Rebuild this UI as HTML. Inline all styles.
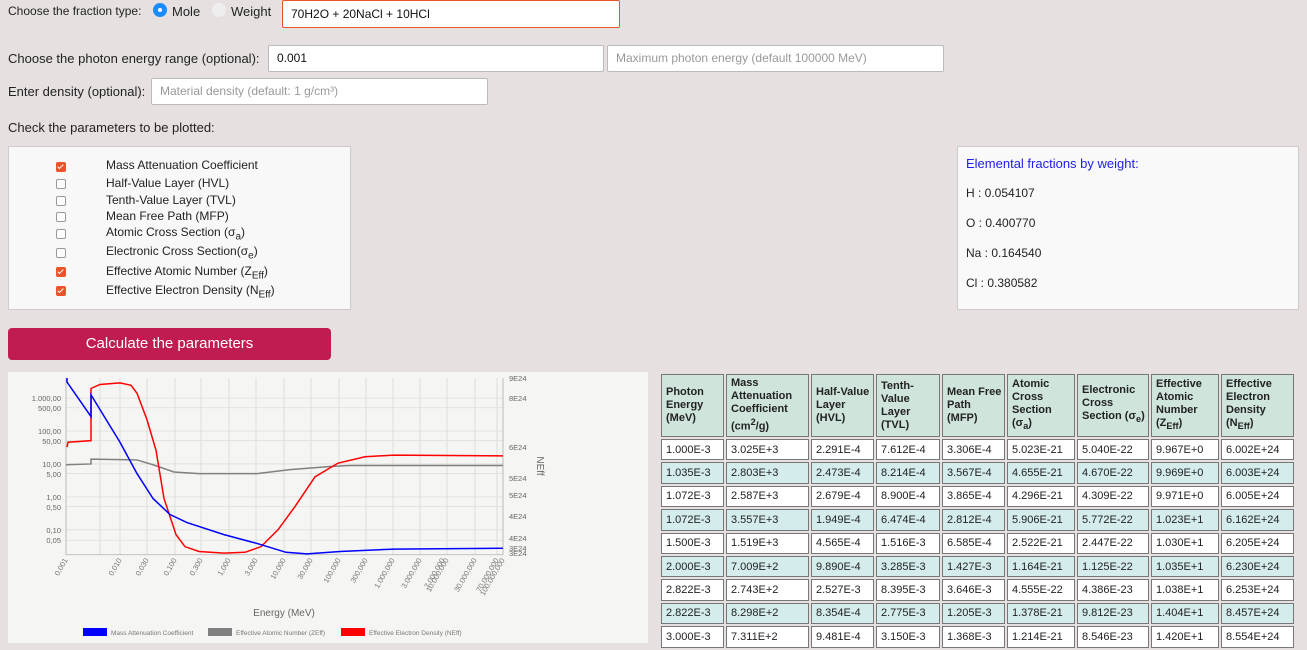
<!DOCTYPE html>
<html><head><meta charset="utf-8"><style>
body{margin:0;width:1307px;height:650px;background:#e6e1e0;font-family:"Liberation Sans",Arial,sans-serif;font-size:13px;color:#222;position:relative;overflow:hidden}
.a{position:absolute;white-space:nowrap}
.inp{position:absolute;background:#fff;border:1px solid #bbb;border-radius:2px;box-sizing:border-box;font-size:12px;padding-left:8px;line-height:24px;color:#333}
.ph{color:#999}
.cb{position:absolute;left:56px;width:8px;height:8px;border:1px solid #999;border-radius:2px;background:#fff}
.cb.on{background:#e9542a;border-color:#e9542a}
.cb.on:after{content:"";position:absolute;left:2px;top:0px;width:2px;height:5px;border:solid #fff;border-width:0 1.5px 1.5px 0;transform:rotate(45deg)}
.lb{position:absolute;left:106px;font-size:12px}
table{position:absolute;left:659px;top:372px;border-collapse:separate;border-spacing:2px;table-layout:fixed;font-size:11px}
td,th{border:1px solid #777;padding:0 0 0 4px;text-align:left;height:19.4px;overflow:hidden;white-space:nowrap;background:#fff}
th{background:#cfe5dc;font-weight:bold;height:61px;white-space:normal;line-height:13px}
tr.s td{background:#d4ecec}
</style></head><body>
<div class="a" style="left:8px;top:4px;font-size:12px">Choose the fraction type:</div>
<div class="a" style="left:153px;top:3px;width:14px;height:14px;border-radius:50%;background:#1a8cff"></div>
<div class="a" style="left:158px;top:8px;width:4px;height:4px;border-radius:50%;background:#fff"></div>
<div class="a" style="left:172px;top:4px">Mole</div>
<div class="a" style="left:212px;top:3px;width:14px;height:14px;border-radius:50%;background:#eee"></div>
<div class="a" style="left:231px;top:4px">Weight</div>
<div class="inp" style="left:282px;top:0;width:338px;height:28px;border-color:#e9542a;color:#111;line-height:26px">70H2O + 20NaCl + 10HCl</div>
<div class="a" style="left:8px;top:51px">Choose the photon energy range (optional):</div>
<div class="inp" style="left:268px;top:45px;width:336px;height:27px;color:#111">0.001</div>
<div class="inp ph" style="left:607px;top:45px;width:337px;height:27px">Maximum photon energy (default 100000 MeV)</div>
<div class="a" style="left:8px;top:84px">Enter density (optional):</div>
<div class="inp ph" style="left:151px;top:78px;width:337px;height:27px">Material density (default: 1 g/cm³)</div>
<div class="a" style="left:8px;top:120px">Check the parameters to be plotted:</div>

<div class="a" style="left:8px;top:146px;width:341px;height:162px;background:#f8f8f8;border:1px solid #ccc"></div>
<div class="cb on" style="top:162px"></div><div class="lb" style="top:158px">Mass Attenuation Coefficient</div>
<div class="cb" style="top:179px"></div><div class="lb" style="top:176px">Half-Value Layer (HVL)</div>
<div class="cb" style="top:196px"></div><div class="lb" style="top:193px">Tenth-Value Layer (TVL)</div>
<div class="cb" style="top:212px"></div><div class="lb" style="top:209px">Mean Free Path (MFP)</div>
<div class="cb" style="top:229px"></div><div class="lb" style="top:225px">Atomic Cross Section (σ<sub>a</sub>)</div>
<div class="cb" style="top:248px"></div><div class="lb" style="top:244px">Electronic Cross Section(σ<sub>e</sub>)</div>
<div class="cb on" style="top:267px"></div><div class="lb" style="top:264px">Effective Atomic Number (Z<sub>Eff</sub>)</div>
<div class="cb on" style="top:286px"></div><div class="lb" style="top:283px">Effective Electron Density (N<sub>Eff</sub>)</div>

<div class="a" style="left:957px;top:146px;width:340px;height:162px;background:#f9f9f9;border:1px solid #ccc"></div>
<div class="a" style="left:966px;top:156px;color:#2020ee">Elemental fractions by weight:</div>
<div class="a" style="left:966px;top:186px;font-size:12px">H : 0.054107</div>
<div class="a" style="left:966px;top:216px;font-size:12px">O : 0.400770</div>
<div class="a" style="left:966px;top:246px;font-size:12px">Na : 0.164540</div>
<div class="a" style="left:966px;top:276px;font-size:12px">Cl : 0.380582</div>

<div class="a" style="left:8px;top:328px;width:323px;height:32px;background:#c01c4f;border-radius:4px;color:#fff;font-size:15px;text-align:center;line-height:32px">Calculate the parameters</div>

<svg class="a" style="left:8px;top:372px" width="640" height="271" viewBox="8 372 640 271" font-family="Liberation Sans,Arial,sans-serif">
<rect x="8" y="372" width="640" height="271" fill="#f5f5f3"/>
<g transform="translate(0,370) scale(1,0.803) translate(0,-370)">
<g stroke="#ddd" stroke-width="1" vector-effect="non-scaling-stroke">
<line x1="66" y1="405" x2="503" y2="405"/><line x1="66" y1="417" x2="503" y2="417"/><line x1="66" y1="446" x2="503" y2="446"/><line x1="66" y1="458" x2="503" y2="458"/><line x1="66" y1="487" x2="503" y2="487"/><line x1="66" y1="499" x2="503" y2="499"/><line x1="66" y1="528" x2="503" y2="528"/><line x1="66" y1="540" x2="503" y2="540"/><line x1="66" y1="569" x2="503" y2="569"/><line x1="66" y1="582" x2="503" y2="582"/>
<line x1="100" y1="380" x2="100" y2="600"/><line x1="120" y1="380" x2="120" y2="600"/><line x1="147" y1="380" x2="147" y2="600"/><line x1="175" y1="380" x2="175" y2="600"/><line x1="201" y1="380" x2="201" y2="600"/><line x1="229" y1="380" x2="229" y2="600"/><line x1="256" y1="380" x2="256" y2="600"/><line x1="284" y1="380" x2="284" y2="600"/><line x1="311" y1="380" x2="311" y2="600"/><line x1="339" y1="380" x2="339" y2="600"/><line x1="366" y1="380" x2="366" y2="600"/><line x1="393" y1="380" x2="393" y2="600"/><line x1="420" y1="380" x2="420" y2="600"/><line x1="447" y1="380" x2="447" y2="600"/><line x1="475" y1="380" x2="475" y2="600"/><line x1="497" y1="380" x2="497" y2="600"/>
</g>
<line x1="66" y1="380" x2="66" y2="600" stroke="#bbb"/><line x1="503" y1="380" x2="503" y2="600" stroke="#bbb"/><line x1="66" y1="600" x2="503" y2="600" stroke="#bbb"/>
<polyline fill="none" stroke="#808080" stroke-width="1.5" vector-effect="non-scaling-stroke" points="66,488 91,487 91,481 137,482 153,488 174,497 199,499 257,499 290,494 332,490 349,489 503,489"/>
<polyline fill="none" stroke="#ff0000" stroke-width="1.5" vector-effect="non-scaling-stroke" points="67,466 68,460 91,458 91,393 100,388 120,386 131,389 137,399 147,432 156,470 164,530 176,575 185,590 199,596 224,598 245,597 261,590 278,569 295,540 315,503 338,486 365,478 394,476 503,477"/>
<polyline fill="none" stroke="#0000ff" stroke-width="1.5" vector-effect="non-scaling-stroke" points="67,380 67,385 91,428 91,401 120,460 137,499 153,530 170,550 187,560 224,575 257,586 286,597 307,599 340,596 394,593 503,592"/>
</g>
<g font-size="7.5" fill="#666" text-anchor="end">
<text x="61" y="401">1.000,00</text><text x="61" y="411">500,00</text><text x="61" y="434">100,00</text><text x="61" y="444">50,00</text><text x="61" y="467">10,00</text><text x="61" y="477">5,00</text><text x="61" y="500">1,00</text><text x="61" y="510">0,50</text><text x="61" y="533">0,10</text><text x="61" y="543">0,05</text>
</g>
<g font-size="7.5" fill="#666">
<text x="509" y="381">9E24</text><text x="509" y="401">8E24</text><text x="509" y="450">6E24</text><text x="509" y="481">5E24</text><text x="509" y="498">5E24</text><text x="509" y="519">4E24</text><text x="509" y="541">4E24</text><text x="509" y="551">3E24</text><text x="509" y="556">3E24</text>
</g>
<text x="537" y="466" font-size="10" fill="#666" transform="rotate(90 537 466)" text-anchor="middle">NEff</text>
<g font-size="7.5" fill="#777" text-anchor="end">
<text transform="translate(68,560) rotate(-60)">0,001</text><text transform="translate(122,560) rotate(-60)">0,010</text><text transform="translate(149,560) rotate(-60)">0,030</text><text transform="translate(177,560) rotate(-60)">0,100</text><text transform="translate(203,560) rotate(-60)">0,300</text><text transform="translate(231,560) rotate(-60)">1,000</text><text transform="translate(258,560) rotate(-60)">3,000</text><text transform="translate(286,560) rotate(-60)">10,000</text><text transform="translate(313,560) rotate(-60)">30,000</text><text transform="translate(341,560) rotate(-60)">100,000</text><text transform="translate(368,560) rotate(-60)">300,000</text><text transform="translate(395,560) rotate(-60)">1.000,000</text><text transform="translate(422,560) rotate(-60)">3.000,000</text><text transform="translate(445,560) rotate(-60)">7.000,000</text><text transform="translate(449,560) rotate(-60)">10.000,000</text><text transform="translate(477,560) rotate(-60)">30.000,000</text><text transform="translate(499,560) rotate(-60)">70.000,000</text><text transform="translate(505,560) rotate(-60)">100.000,000</text>
</g>
<text x="284" y="616" font-size="10" fill="#666" text-anchor="middle">Energy (MeV)</text>
<rect x="83" y="628" width="24" height="8" fill="#0000ff"/><text x="111" y="635" font-size="6.5" fill="#777">Mass Attenuation Coefficient</text>
<rect x="208" y="628" width="24" height="8" fill="#808080"/><text x="236" y="635" font-size="6.5" fill="#777">Effective Atomic Number (ZEff)</text>
<rect x="341" y="628" width="24" height="8" fill="#ff0000"/><text x="369" y="635" font-size="6.5" fill="#777">Effective Electron Density (NEff)</text>
</svg>

<table>
<colgroup><col style="width:63px"><col style="width:83px"><col style="width:63px"><col style="width:64px"><col style="width:63px"><col style="width:68px"><col style="width:72px"><col style="width:68px"><col style="width:73px"></colgroup>
<tr><th>Photon Energy (MeV)</th><th>Mass Attenuation Coefficient (cm<sup>2</sup>/g)</th><th>Half-Value Layer (HVL)</th><th>Tenth-Value Layer (TVL)</th><th>Mean Free Path (MFP)</th><th>Atomic Cross Section (σ<sub>a</sub>)</th><th>Electronic Cross Section (σ<sub>e</sub>)</th><th>Effective Atomic Number (Z<sub>Eff</sub>)</th><th>Effective Electron Density (N<sub>Eff</sub>)</th></tr>
<tr><td>1.000E-3</td><td>3.025E+3</td><td>2.291E-4</td><td>7.612E-4</td><td>3.306E-4</td><td>5.023E-21</td><td>5.040E-22</td><td>9.967E+0</td><td>6.002E+24</td></tr>
<tr class="s"><td>1.035E-3</td><td>2.803E+3</td><td>2.473E-4</td><td>8.214E-4</td><td>3.567E-4</td><td>4.655E-21</td><td>4.670E-22</td><td>9.969E+0</td><td>6.003E+24</td></tr>
<tr><td>1.072E-3</td><td>2.587E+3</td><td>2.679E-4</td><td>8.900E-4</td><td>3.865E-4</td><td>4.296E-21</td><td>4.309E-22</td><td>9.971E+0</td><td>6.005E+24</td></tr>
<tr class="s"><td>1.072E-3</td><td>3.557E+3</td><td>1.949E-4</td><td>6.474E-4</td><td>2.812E-4</td><td>5.906E-21</td><td>5.772E-22</td><td>1.023E+1</td><td>6.162E+24</td></tr>
<tr><td>1.500E-3</td><td>1.519E+3</td><td>4.565E-4</td><td>1.516E-3</td><td>6.585E-4</td><td>2.522E-21</td><td>2.447E-22</td><td>1.030E+1</td><td>6.205E+24</td></tr>
<tr class="s"><td>2.000E-3</td><td>7.009E+2</td><td>9.890E-4</td><td>3.285E-3</td><td>1.427E-3</td><td>1.164E-21</td><td>1.125E-22</td><td>1.035E+1</td><td>6.230E+24</td></tr>
<tr><td>2.822E-3</td><td>2.743E+2</td><td>2.527E-3</td><td>8.395E-3</td><td>3.646E-3</td><td>4.555E-22</td><td>4.386E-23</td><td>1.038E+1</td><td>6.253E+24</td></tr>
<tr class="s"><td>2.822E-3</td><td>8.298E+2</td><td>8.354E-4</td><td>2.775E-3</td><td>1.205E-3</td><td>1.378E-21</td><td>9.812E-23</td><td>1.404E+1</td><td>8.457E+24</td></tr>
<tr><td>3.000E-3</td><td>7.311E+2</td><td>9.481E-4</td><td>3.150E-3</td><td>1.368E-3</td><td>1.214E-21</td><td>8.546E-23</td><td>1.420E+1</td><td>8.554E+24</td></tr>
</table>
</body></html>
